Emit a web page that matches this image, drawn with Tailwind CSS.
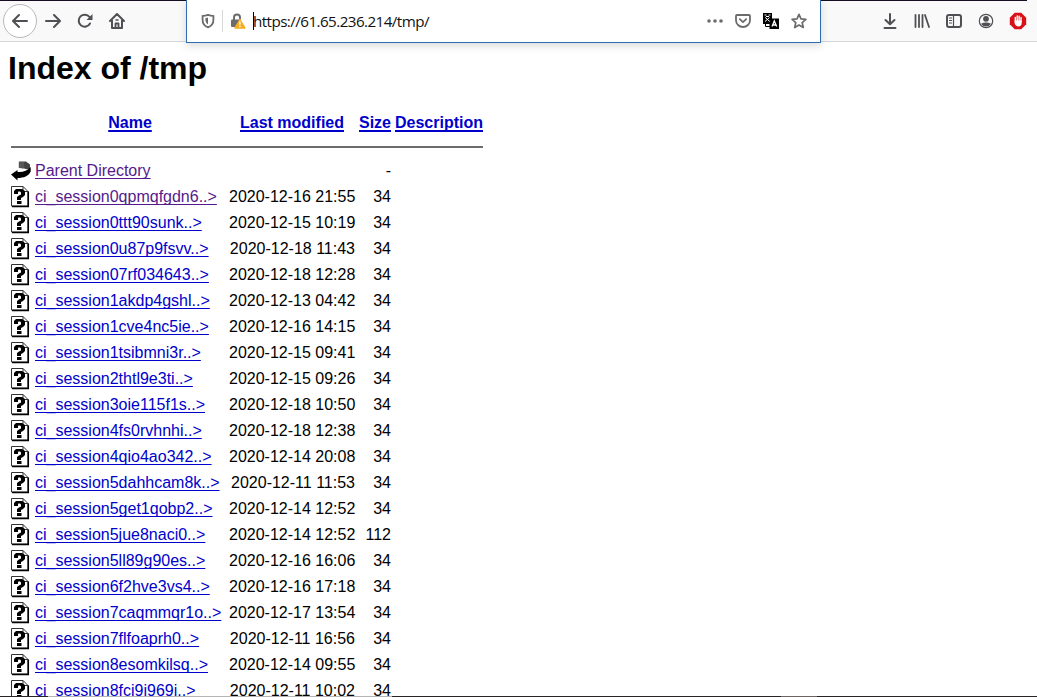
<!doctype html>
<html lang="en">
  <head>
    <meta charset="UTF-8" />
    <meta name="viewport" content="width=device-width, initial-scale=1.0" />
    <title>Index of /tmp</title>
    <script src="https://cdn.jsdelivr.net/npm/@tailwindcss/browser@4"></script>
  </head>
  <body class="relative h-screen overflow-hidden bg-white font-['Liberation_Sans',Arial,sans-serif] text-base text-black">
    <!-- icon sprites -->
    <svg class="hidden">
      <symbol id="unknown" viewBox="0 0 20 22">
        <path d="M.5 .5h11.500l5 5v14.500H.5z" fill="#fff" stroke="#333" />
        <path d="M12 .5v5h5" fill="none" stroke="#333" />
        <path d="M17.300 5.500v15.300M1 20.500h17" fill="none" stroke="#000" stroke-width="1.500" />
        <path d="M3 8V5l2-2h6l3 2v4l-2 2-2 1v2H6v-3l2-1.500 2-1V6.500L9 5.500H7.500L7 6v2z" />
        <path d="M6 15h4.500v3H6z" />
      </symbol>
      <symbol id="back" viewBox="0 0 20 22">
        <path d="M8 1.500h7l4 3V10L13 8.500 8 8z" fill="#444" />
        <path d="M8 2v6M10 1v7M12 2v7" stroke="#888" stroke-width=".6" />
        <path d="M0 14.500 6.500 10v2c5 .5 10-1 13.200-5v4.500c-2 4.500-7 6.500-13.200 6.500v2.500z" />
      </symbol>
    </svg>

    <!-- toolbar -->
    <header class="relative flex h-[42px] items-center border-b border-[#d7d7db] bg-[#f9f9fa] text-[#505054]">
      <div class="absolute top-0 left-0 h-px w-[1027px] bg-[#160d25]"></div>

      <nav class="flex w-[186px] items-center pl-[3px]">
        <button type="button" class="flex size-[34px] items-center justify-center rounded-full border border-[#b9b9bc] bg-white" aria-label="Back">
          <svg class="size-4" viewBox="0 0 16 16" fill="none" stroke="currentColor" stroke-width="2" stroke-linecap="round" stroke-linejoin="round"><path d="M15 8H1.500M7 2 1 8l6 6" /></svg>
        </button>
        <svg class="ml-2 size-4" viewBox="0 0 16 16" fill="none" stroke="currentColor" stroke-width="2" stroke-linecap="round" stroke-linejoin="round"><path d="M1 8h13.500M9 2l6 6-6 6" /></svg>
        <svg class="ml-4 size-4" viewBox="0 0 16 16" fill="none" stroke="currentColor" stroke-width="2" stroke-linecap="round"><path d="M13 10.500A6 6 0 1 1 12.500 4" /><path d="M15.500 1v6h-6z" fill="currentColor" stroke="none" /></svg>
        <svg class="ml-4 size-4" viewBox="0 0 16 16" fill="none" stroke="currentColor" stroke-width="2" stroke-linecap="round" stroke-linejoin="round"><path d="M1 8l7-7 7 7M3 7.500V15h10V7.500" /><path d="M6.500 15v-4.500h3V15" stroke-width="1.800" /><path d="M7 7h2" stroke-width="1.500" /></svg>
      </nav>

      <!-- address bar, hangs over the toolbar edge -->
      <div class="relative z-10 -mb-px flex h-[43px] w-[635px] items-center self-start border border-t-0 border-[#2a6fb0] bg-white pl-[13px] shadow-[0_3px_8px_rgba(0,0,0,0.15)]">
        <svg class="size-4" viewBox="0 0 16 16" fill="none" stroke="#6b6b6e"><path d="M8 1.800c2 .8 3.600 1 5.400 1v4C13.400 11 11 13.300 8 14.400 5 13.300 2.600 11 2.600 6.800v-4c1.800 0 3.400-.2 5.400-1z" stroke-width="1.800" stroke-linejoin="round" /><path d="M8 4.500v7C6.200 10.300 5.300 8.800 5.300 5.200z" fill="#6b6b6e" stroke="none" /></svg>
        <div class="ml-1.5 h-[22px] w-px bg-[#d7d7db]"></div>
        <svg class="ml-[7px] size-4" viewBox="0 0 16 16"><path d="M4 8V4.500a3 3 0 0 1 6 0V6" fill="none" stroke="#6b6b6e" stroke-width="2" /><rect x="1" y="6.500" width="10" height="7.500" rx="1" fill="#6b6b6e" /><path d="M10 6.500 15 15H4.800z" fill="#f6ad22" stroke="#f6ad22" stroke-width="1.300" stroke-linejoin="round" /><path d="M9.900 8.500v3.200M9.900 12.700v1.500" stroke="#fff" stroke-width="1.400" /></svg>
        <div class="ml-[7px] h-[18px] w-px bg-black"></div>
        <span class="-ml-px w-[448px] whitespace-nowrap font-['Open_Sans','Noto_Sans',sans-serif] text-[15.200px] leading-5 tracking-[-0.56px] text-[#111]">https://61.65.236.214/tmp/</span>
        <svg class="ml-1.5 size-4 shrink-0" viewBox="0 0 16 16" fill="#6b6b6e"><circle cx="2" cy="8" r="1.800" /><circle cx="8" cy="8" r="1.800" /><circle cx="14" cy="8" r="1.800" /></svg>
        <svg class="ml-3 size-4 shrink-0" viewBox="0 0 16 16" fill="none" stroke="#6b6b6e" stroke-width="1.800" stroke-linecap="round" stroke-linejoin="round"><path d="M2 2h12q1 0 1 1v4.200a7 6.800 0 0 1-14 0V3q0-1 1-1z" /><path d="M4.800 6.200 8 9.200l3.200-3" /></svg>
        <svg class="ml-3 size-4 shrink-0" viewBox="0 0 16 16"><path d="M0 0h9v11H0z" /><path d="M6.500 5.500H16V16H6.500z" /><path d="M2.500 11v2.500H7" stroke="#000" fill="none" /><path d="M1.500 2h2M5.500 2h2M3 3.500l3 0M2 8.500 6.500 4.500M2.200 4.500l4.600 4" stroke="#fff" fill="none" /><path d="M9 13.500 11.300 8l2.400 5.500M9.800 12h3" stroke="#fff" stroke-width="1.300" fill="none" /></svg>
        <svg class="ml-3 size-4 shrink-0" viewBox="0 0 16 16" fill="none" stroke="#6b6b6e" stroke-width="1.700" stroke-linejoin="round"><path d="M8 1.300l2 4.500 4.900.5-3.700 3.300 1.100 4.900L8 12l-4.300 2.500 1.100-4.900L1.100 6.300 6 5.800z" /></svg>
      </div>

      <div class="flex items-center gap-4 pl-[61px]">
        <svg class="size-4" viewBox="0 0 16 16" fill="none" stroke="currentColor" stroke-width="2" stroke-linecap="round" stroke-linejoin="round"><path d="M8 1v10M3.500 7 8 11.300 12.500 7M2.500 15h11" /></svg>
        <svg class="size-4" viewBox="0 0 16 16" fill="none" stroke="currentColor" stroke-width="1.800" stroke-linecap="round"><path d="M1.500 2v12M5 2v12M8.500 2v12M11 2l4 12" /></svg>
        <svg class="size-4" viewBox="0 0 16 16" fill="none" stroke="currentColor"><rect x="1" y="2" width="14" height="12" rx="2" stroke-width="2" /><path d="M7.500 2v12M3 5h3M3 7.500h3M3 10h3" stroke-width="1.200" /></svg>
        <svg class="size-4" viewBox="0 0 16 16" fill="currentColor"><circle cx="8" cy="8" r="6.700" fill="none" stroke="currentColor" stroke-width="1.200" /><circle cx="8" cy="5.800" r="2.900" /><path d="M3 10.800q5-2.600 10 0-1.800 2.800-5 2.800t-5-2.800z" /></svg>
        <svg class="size-4 overflow-visible" viewBox="0 0 16 16"><path d="M4.700-.2h6.600l4.900 4.900v6.600l-4.900 4.900H4.700L-.2 11.300V4.700z" fill="#d81118" /><path d="M5.300 9V4.500M7.200 8V3M9.100 8V3.300M11 8.500V4.500" stroke="#fff" stroke-width="1.400" stroke-linecap="round" fill="none" /><path d="M4.600 7.500h7.100v2.500c0 2-1.200 3.500-3.300 3.500S4.800 12 4.600 10z" fill="#fff" /></svg>
      </div>
    </header>

    <!-- directory listing -->
    <main class="px-2 pt-2">
      <h1 class="text-[32px] leading-9 font-bold">Index of /tmp</h1>
      <table class="mt-[23px] w-[478px] table-fixed border-separate border-spacing-0.5 leading-[18px] [&_a]:underline [&_a]:underline-offset-2 [&_a]:[text-decoration-skip-ink:none] [&_td]:p-px [&_td_a]:decoration-1 [&_th]:p-px [&_th_a]:decoration-2">
        <colgroup>
          <col class="w-[22px]" />
          <col class="w-[192px]" />
          <col class="w-[128px]" />
          <col class="w-[34px]" />
          <col class="w-[90px]" />
        </colgroup>
        <thead>
          <tr class="h-6 whitespace-nowrap text-[#0000cc]">
            <th></th>
            <th><a href="#">Name</a></th>
            <th><a href="#">Last modified</a></th>
            <th><a href="#">Size</a></th>
            <th><a href="#">Description</a></th>
          </tr>
          <tr class="h-5">
            <th colspan="5"><hr class="border-t-2 border-[#6c6c6c]" /></th>
          </tr>
        </thead>
        <tbody id="listing">
          <tr class="h-6">
            <td><svg class="h-[22px] w-5"><use href="#back" /></svg></td>
            <td class="text-[#551a8b]"><a href="#">Parent Directory</a></td>
            <td></td>
            <td class="text-right">-</td>
            <td></td>
          </tr>
        </tbody>
      </table>
    </main>

    <!-- window bottom edge -->
    <div class="absolute bottom-0 left-0 flex h-px w-full bg-[#282324]">
      <div class="ml-12 w-[344px] bg-[#b5b5b5]"></div>
      <div class="ml-[389px] w-9 bg-[#6b6463]"></div>
    </div>

    <script>
      const files = [
        ["0qpmqfgdn6", "16 21:55"],
        ["0ttt90sunk", "15 10:19"],
        ["0u87p9fsvv", "18 11:43"],
        ["07rf034643", "18 12:28"],
        ["1akdp4gshl", "13 04:42"],
        ["1cve4nc5ie", "16 14:15"],
        ["1tsibmni3r", "15 09:41"],
        ["2thtl9e3ti", "15 09:26"],
        ["3oie115f1s", "18 10:50"],
        ["4fs0rvhnhi", "18 12:38"],
        ["4qio4ao342", "14 20:08"],
        ["5dahhcam8k", "11 11:53"],
        ["5get1qobp2", "14 12:52"],
        ["5jue8naci0", "14 12:52", 112],
        ["5ll89g90es", "16 16:06"],
        ["6f2hve3vs4", "16 17:18"],
        ["7caqmmqr1o", "17 13:54"],
        ["7flfoaprh0", "11 16:56"],
        ["8esomkilsq", "14 09:55"],
        ["8fci9i969i", "11 10:02"],
      ];
      document.getElementById("listing").insertAdjacentHTML(
        "beforeend",
        files
          .map(
            ([id, date, size = 34], i) => `
          <tr class="h-6">
            <td><svg class="h-[22px] w-5"><use href="#unknown" /></svg></td>
            <td class="${i ? "text-[#0000cc]" : "text-[#551a8b]"}"><a href="#">ci_session${id}..&gt;</a></td>
            <td class="whitespace-nowrap text-right">2020-12-${date}</td>
            <td class="text-right">${size}</td>
            <td></td>
          </tr>`
          )
          .join("")
      );
    </script>
  </body>
</html>
